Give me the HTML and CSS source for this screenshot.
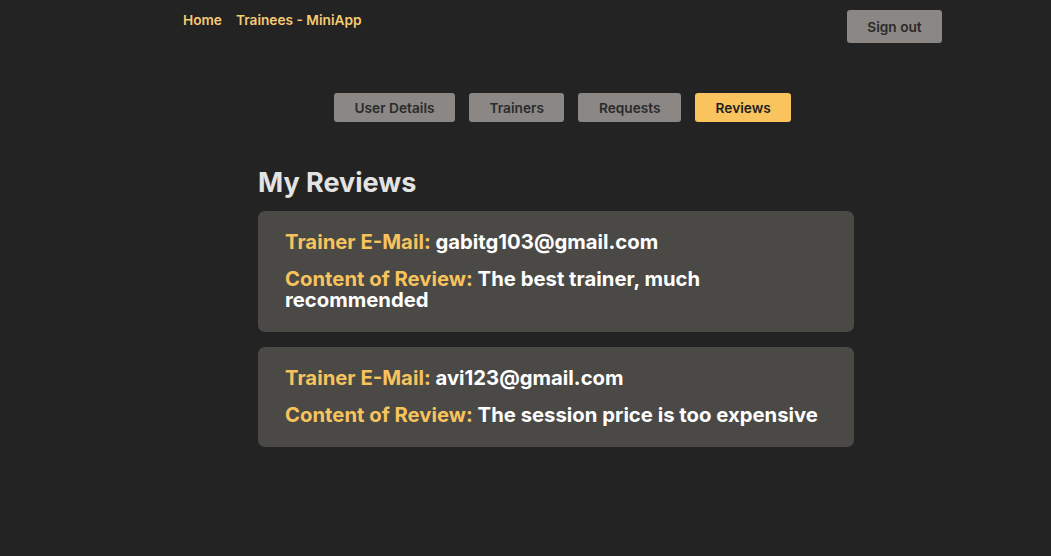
FILE: index.html
```html
<!DOCTYPE html>
<html>
<head>
<meta charset="utf-8">
<link rel="stylesheet" href="styles.css">
</head>
<body>
<header class="topbar">
  <nav class="links">
    <a class="link" href="#">Home</a>
    <a class="link" href="#">Trainees - MiniApp</a>
  </nav>
  <button class="signout">Sign out</button>
</header>
<div class="tabs">
  <button class="tab">User Details</button>
  <button class="tab">Trainers</button>
  <button class="tab">Requests</button>
  <button class="tab active">Reviews</button>
</div>
<main class="content">
  <h1 class="title">My Reviews</h1>
  <div class="cards">
    <div class="card">
      <p class="row"><span class="label">Trainer E-Mail:</span> gabitg103@gmail.com</p>
      <p class="row"><span class="label">Content of Review:</span> The best trainer, much recommended</p>
    </div>
    <div class="card">
      <p class="row"><span class="label">Trainer E-Mail:</span> avi123@gmail.com</p>
      <p class="row"><span class="label">Content of Review:</span> The session price is too expensive</p>
    </div>
  </div>
</main>
</body>
</html>
```
FILE: styles.css
```css
html, body {
  margin: 0;
  padding: 0;
  background: #232323;
  font-family: Inter, "Noto Sans", sans-serif;
  height: 100%;
}
.topbar {
  display: flex;
  justify-content: space-between;
  align-items: flex-start;
  padding: 10px 109px 0 183px;
}
.links {
  display: flex;
  gap: 14px;
  padding-top: 2px;
}
.link {
  color: #f7ca72;
  font-size: 13.7px;
  font-weight: 600;
  text-decoration: none;
}
.signout {
  width: 95px;
  height: 33px;
  background: #8a8784;
  border: none;
  border-radius: 3px;
  color: #2b2b2b;
  font-family: inherit;
  font-size: 13.7px;
  font-weight: 600;
}
.tabs {
  display: flex;
  gap: 14px;
  margin: 50px 0 0 334px;
}
.tab {
  height: 29px;
  padding: 0 20.5px;
  background: #8a8784;
  border: none;
  border-radius: 3px;
  color: #2b2b2b;
  font-family: inherit;
  font-size: 13.7px;
  font-weight: 600;
}
.tab.active {
  background: #f9c35d;
  color: #1e1e1e;
}
.content {
  width: 596px;
  margin: 0 0 0 258px;
}
.title {
  margin: 45px 0 12px;
  color: #e3e3e3;
  font-size: 27px;
  font-weight: 700;
  line-height: 32px;
}
.cards {
  display: flex;
  flex-direction: column;
  gap: 15px;
}
.card {
  background: #4b4946;
  border-radius: 7px;
  padding: 20px 27px 22px;
  display: flex;
  flex-direction: column;
  gap: 16px;
}
.row {
  margin: 0;
  color: #ffffff;
  font-size: 20.3px;
  font-weight: 700;
  line-height: 21px;
}
.label {
  color: #f8c35c;
}
```
